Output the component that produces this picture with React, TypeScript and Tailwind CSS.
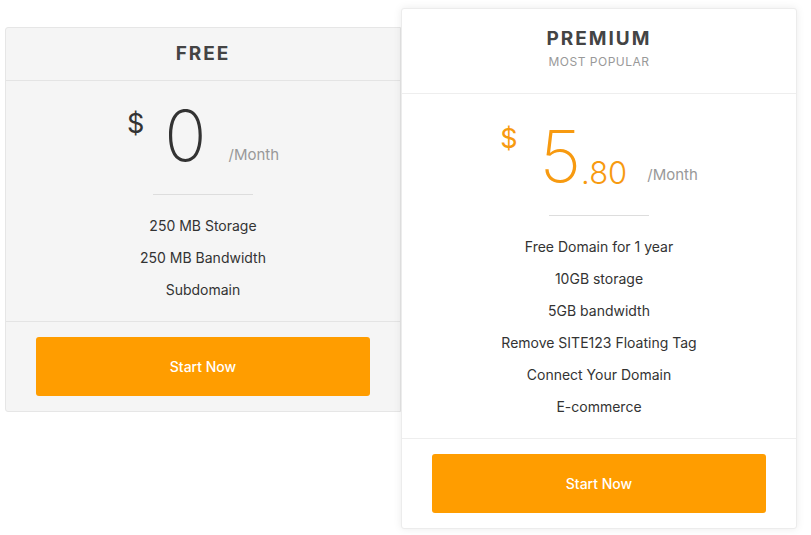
import React from 'react';

const freeFeatures = ['250 MB Storage', '250 MB Bandwidth', 'Subdomain'];
const premiumFeatures = [
  'Free Domain for 1 year',
  '10GB storage',
  '5GB bandwidth',
  'Remove SITE123 Floating Tag',
  'Connect Your Domain',
  'E-commerce',
];

const FeatureList = ({ items }: { items: string[] }) => (
  <ul className="flex flex-col gap-[12px] text-[14px] leading-[20px] text-[#333]">
    {items.map((f) => (
      <li key={f}>{f}</li>
    ))}
  </ul>
);

const StartButton = () => (
  <button className="w-full h-[59px] rounded-[3px] bg-[#ff9d00] text-white text-[14px] font-medium">
    Start Now
  </button>
);

export default function App() {
  return (
    <div
      className="w-[811px] h-[535px] bg-white flex items-start pl-[5px] pt-[8px]"
      style={{ fontFamily: 'Inter, "Noto Sans", sans-serif' }}
    >
      {/* Free plan */}
      <div className="mt-[19px] w-[396px] bg-[#f5f5f5] border border-[#e6e6e6] rounded-l-[3px] text-center">
        <div className="h-[53px] flex items-center justify-center border-b border-[#e4e4e4]">
          <h2 className="text-[19px] font-bold tracking-[2px] text-[#444]">FREE</h2>
        </div>
        <div className="pt-[26px] pb-[21px] flex flex-col items-center">
          <div className="flex items-start h-[60px] text-[#333]">
            <span className="text-[27px] leading-none mt-[3px] mr-[20px]">$</span>
            <span className="text-[70px] font-extralight leading-[58px]">0</span>
            <span className="self-end ml-[22px] mb-[1px] text-[15px] text-[#999]">/Month</span>
          </div>
          <div className="w-[100px] h-px bg-[#ddd] mt-[27px] mb-[21px]" />
          <FeatureList items={freeFeatures} />
        </div>
        <div className="border-t border-[#e4e4e4] px-[30px] pt-[15px] pb-[15px]">
          <StartButton />
        </div>
      </div>

      {/* Premium plan */}
      <div className="w-[396px] bg-white border border-[#ececec] rounded-[3px] shadow-[0_0_8px_rgba(0,0,0,0.08)] text-center">
        <div className="h-[85px] pt-[18px] flex flex-col items-center border-b border-[#eeeeee]">
          <h2 className="text-[19px] font-bold tracking-[2px] text-[#444] leading-[24px]">PREMIUM</h2>
          <p className="mt-[3px] text-[12px] tracking-[0.5px] text-[#999] leading-[16px]">MOST POPULAR</p>
        </div>
        <div className="pt-[33px] pb-[21px] flex flex-col items-center">
          <div className="flex items-start h-[60px] text-[#f79a10]">
            <span className="text-[27px] leading-none mt-[-2px] mr-[22px]">$</span>
            <span className="text-[72px] font-extralight leading-[58px]">5</span>
            <span className="self-end text-[31px] font-light leading-none mb-[-1px]">.80</span>
            <span className="self-end ml-[20px] mb-[1px] text-[15px] text-[#999]">/Month</span>
          </div>
          <div className="w-[100px] h-px bg-[#ddd] mt-[28px] mb-[21px]" />
          <FeatureList items={premiumFeatures} />
        </div>
        <div className="border-t border-[#eeeeee] px-[30px] pt-[15px] pb-[15px]">
          <StartButton />
        </div>
      </div>
    </div>
  );
}
